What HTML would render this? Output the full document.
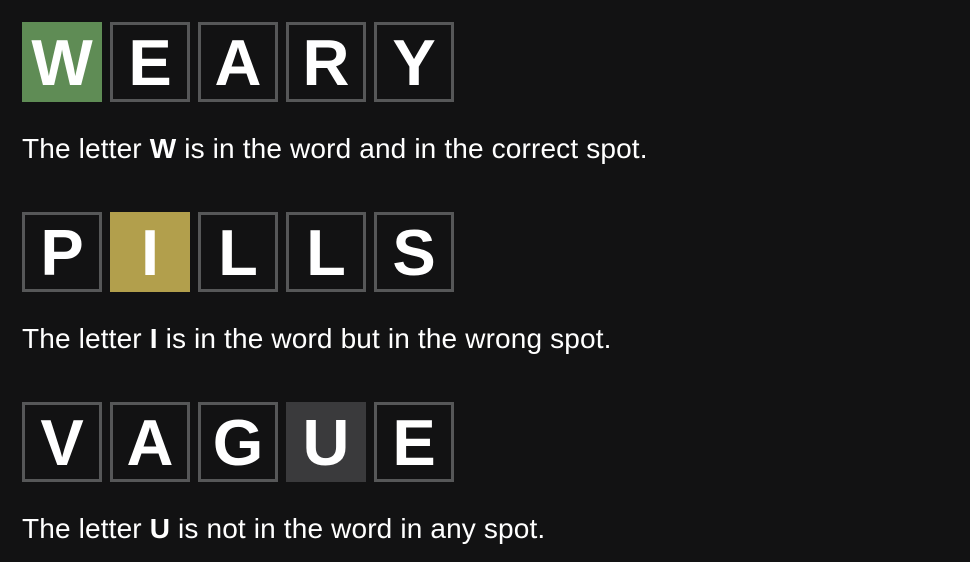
<!DOCTYPE html>
<html><head><style>
html,body{margin:0;padding:0;background:#121213;width:970px;height:562px;overflow:hidden;font-family:"Liberation Sans",Arial,sans-serif;color:#fff}
.row{position:absolute;left:22px;display:flex;gap:8px}
.t{width:80px;height:80px;box-sizing:border-box;border:3px solid #565758;display:flex;align-items:center;justify-content:center;font-weight:bold;font-size:65px;line-height:1;background:#121213}
.g{background:#5f8c55;border:none}
.y{background:#b29f4c;border:none}
.a{background:#3a3a3c;border:none}
p{position:absolute;left:22px;margin:0;font-size:28px;line-height:30px;white-space:nowrap;letter-spacing:0.15px}
</style></head><body>
<div class="row" style="top:22px"><div class="t g">W</div><div class="t">E</div><div class="t">A</div><div class="t">R</div><div class="t">Y</div></div>
<p style="top:134px">The letter <b>W</b> is in the word and in the correct spot.</p>
<div class="row" style="top:212px"><div class="t">P</div><div class="t y">I</div><div class="t">L</div><div class="t">L</div><div class="t">S</div></div>
<p style="top:324px">The letter <b>I</b> is in the word but in the wrong spot.</p>
<div class="row" style="top:402px"><div class="t">V</div><div class="t">A</div><div class="t">G</div><div class="t a">U</div><div class="t">E</div></div>
<p style="top:514px">The letter <b>U</b> is not in the word in any spot.</p>
</body></html>
